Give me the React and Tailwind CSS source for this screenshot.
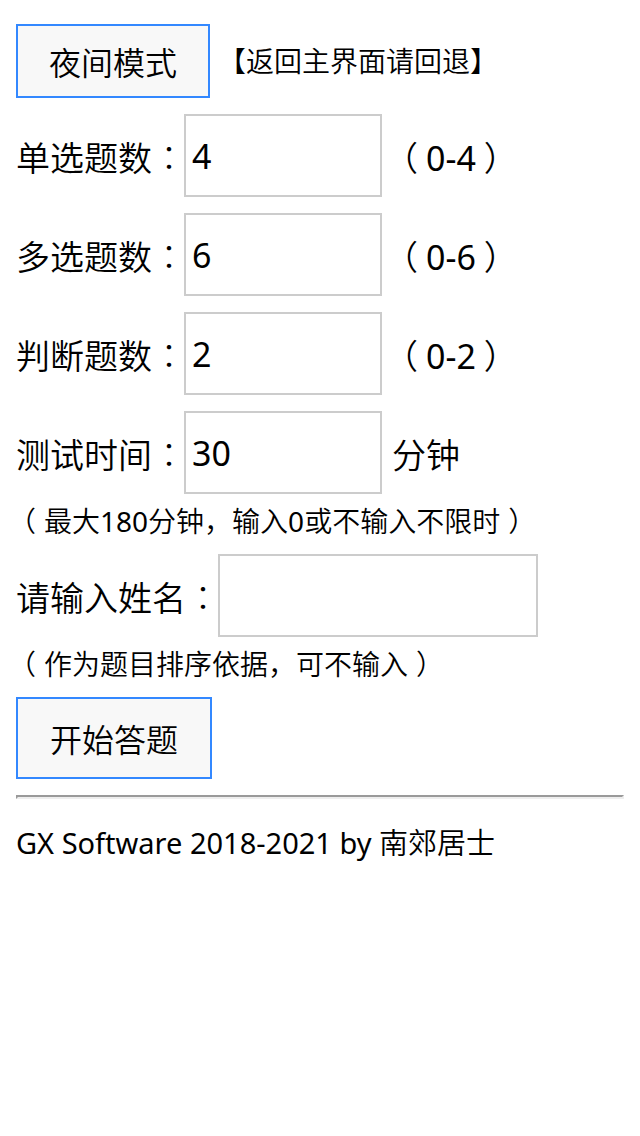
import { useState } from "react";

const fonts = "font-['Noto_Sans','Noto_Sans_CJK_SC',sans-serif]";
const inputBase =
  "h-[83px] rounded-none border-2 border-[#ccc] bg-transparent px-1.5 text-[34px] font-normal outline-none";
const buttonBase =
  "rounded-none border-2 border-[#3388ff] bg-[#f8f8f8] pt-1 text-[32px] text-black";

function Latin({ children }) {
  return <span className="font-normal">{children}</span>;
}

// Full-width parentheses, with the bracket centred in its cell.
function Paren({ children }) {
  return (
    <>
      <span className="-ml-2 mr-2">（</span>
      {children}
      <span className="-mr-2 ml-2">）</span>
    </>
  );
}

function Label({ htmlFor, className, children }) {
  return (
    <label htmlFor={htmlFor} className={`shrink-0 pt-1 whitespace-nowrap ${className}`}>
      {children}
      <span lang="zh-TW" className="font-['Noto_Sans_CJK_TC',sans-serif] font-light">：</span>
    </label>
  );
}

function NumberRow({ id, label, value, onChange, children }) {
  return (
    <div className="flex items-center">
      <Label htmlFor={id} className="w-[168px]">{label}</Label>
      <input
        id={id}
        inputMode="numeric"
        value={value}
        onChange={(e) => onChange(e.target.value)}
        className={`${inputBase} w-[198px] min-w-0`}
      />
      <span className="ml-2.5 pt-1 whitespace-nowrap">{children}</span>
    </div>
  );
}

function Range({ max }) {
  return (
    <Paren>
      <Latin>0-{max}</Latin>
    </Paren>
  );
}

export default function App() {
  const [night, setNight] = useState(false);
  const [single, setSingle] = useState("4");
  const [multi, setMulti] = useState("6");
  const [judge, setJudge] = useState("2");
  const [minutes, setMinutes] = useState("30");
  const [name, setName] = useState("");

  return (
    <main
      lang="zh-CN"
      className={`min-h-screen px-4 py-6 text-[34px] leading-none font-[350] ${fonts} ${
        night ? "bg-[#222] text-[#ddd]" : "bg-white text-black"
      }`}
    >
      <div className="flex items-center">
        <button
          type="button"
          onClick={() => setNight(!night)}
          className={`${buttonBase} h-[74px] w-[194px]`}
        >
          夜间模式
        </button>
        <span className="ml-2 text-[28px] whitespace-nowrap">【返回主界面请回退】</span>
      </div>

      <form onSubmit={(e) => e.preventDefault()}>
        <div className="mt-4 flex flex-col gap-4">
          <NumberRow id="single" label="单选题数" value={single} onChange={setSingle}>
            <Range max={4} />
          </NumberRow>
          <NumberRow id="multi" label="多选题数" value={multi} onChange={setMulti}>
            <Range max={6} />
          </NumberRow>
          <NumberRow id="judge" label="判断题数" value={judge} onChange={setJudge}>
            <Range max={2} />
          </NumberRow>
          <NumberRow id="minutes" label="测试时间" value={minutes} onChange={setMinutes}>
            分钟
          </NumberRow>
        </div>
        <p className="mb-1.5 text-[28px] leading-[54px]">
          <Paren>
            最大<Latin>180</Latin>分钟，输入<Latin>0</Latin>或不输入不限时
          </Paren>
        </p>
        <div className="flex items-center">
          <Label htmlFor="name" className="w-[202px]">请输入姓名</Label>
          <input
            id="name"
            type="text"
            value={name}
            onChange={(e) => setName(e.target.value)}
            className={`${inputBase} w-[320px] min-w-0`}
          />
        </div>
        <p className="mb-1.5 text-[28px] leading-[54px]">
          <Paren>作为题目排序依据，可不输入</Paren>
        </p>
        <button type="submit" className={`${buttonBase} block h-[82px] w-[196px]`}>
          开始答题
        </button>
      </form>

      <hr className="mt-4 h-1 border-2 border-t-[#9a9a9a] border-r-[#eee] border-b-[#eee] border-l-[#9a9a9a]" />
      <footer className="mt-4 text-[29px] leading-14">
        <Latin>GX Software 2018-2021 by </Latin>南郊居士
      </footer>
    </main>
  );
}
